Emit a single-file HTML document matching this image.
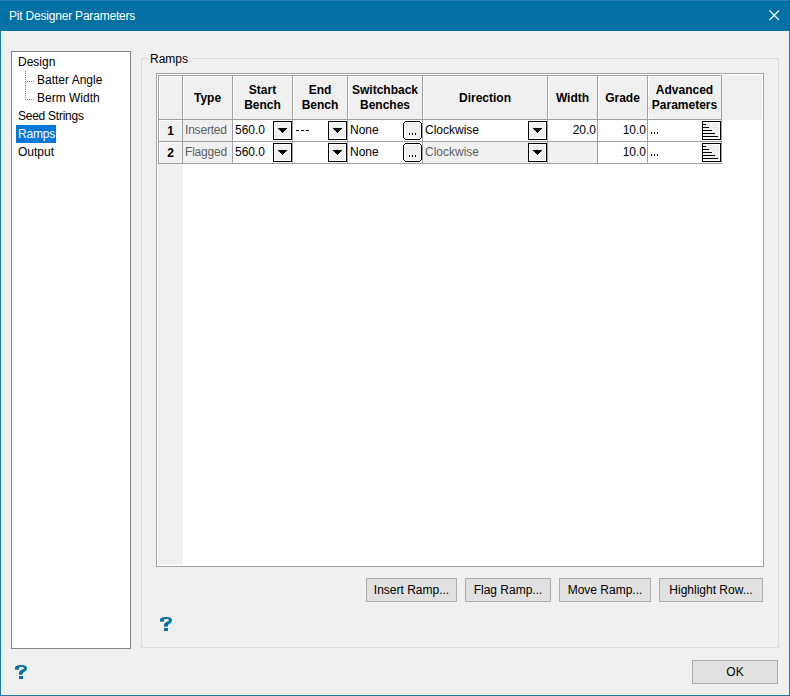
<!DOCTYPE html>
<html><head><meta charset="utf-8">
<style>
*{box-sizing:border-box;margin:0;padding:0}
html,body{width:790px;height:696px;overflow:hidden;background:#f0f0f0}
body{position:relative;font-family:"Liberation Sans",sans-serif;font-size:12px;color:#000}
.a{position:absolute}
.t{position:absolute;white-space:pre;line-height:12px;font-size:12px;letter-spacing:0px}
.b{font-weight:bold}
.btn{position:absolute;background:#e1e1e1;border:1px solid #adadad;height:24px}
.btn span{position:absolute;left:0;right:0;top:5px;text-align:center;line-height:12px;white-space:pre;font-size:12px;letter-spacing:0px}
.dd{position:absolute;width:19px;height:19px;border:1px solid #000;background:#f0f0f0;border-radius:1px}
.dd:after{content:"";position:absolute;left:4px;top:6px;border-left:5px solid transparent;border-right:5px solid transparent;border-top:5px solid #000}
.el{position:absolute;width:19px;height:19px;border:1px solid #000;background:#f0f0f0;border-radius:3px}
.gray{color:#5f5f5f}

</style></head><body>
<div class="a" style="left:0px;top:0px;width:790px;height:696px;background:#f0f0f0;border:1px solid #2279b0;border-top:0"></div>
<div class="a" style="left:0px;top:0px;width:790px;height:31px;background:#0371a6;border-top:1px solid #2a7db0"></div>
<div class="t " style="left:9px;top:10px;color:#fff;letter-spacing:-0.2px">Pit Designer Parameters</div>
<svg class="a" style="left:768px;top:9px" width="13" height="13" viewBox="0 0 13 13"><path d="M1.5 1.5L11 11M11 1.5L1.5 11" stroke="#fff" stroke-width="1.1"/></svg>
<div class="a" style="left:11px;top:51px;width:120px;height:598px;background:#fff;border:1px solid #828790"></div>
<div class="t " style="left:18px;top:56px;">Design</div>
<div class="t " style="left:37px;top:74px;">Batter Angle</div>
<div class="t " style="left:37px;top:92px;">Berm Width</div>
<div class="t " style="left:18px;top:110px;letter-spacing:-0.25px">Seed Strings</div>
<div class="a" style="left:16px;top:125px;width:40px;height:18px;background:#0078d7;"></div>
<div class="t " style="left:18px;top:128px;color:#fff;letter-spacing:-0.2px">Ramps</div>
<div class="t " style="left:18px;top:146px;">Output</div>
<div class="a" style="left:25px;top:71px;width:1px;height:1px;background:#808080;"></div>
<div class="a" style="left:25px;top:73px;width:1px;height:1px;background:#808080;"></div>
<div class="a" style="left:25px;top:75px;width:1px;height:1px;background:#808080;"></div>
<div class="a" style="left:25px;top:77px;width:1px;height:1px;background:#808080;"></div>
<div class="a" style="left:25px;top:79px;width:1px;height:1px;background:#808080;"></div>
<div class="a" style="left:25px;top:81px;width:1px;height:1px;background:#808080;"></div>
<div class="a" style="left:25px;top:83px;width:1px;height:1px;background:#808080;"></div>
<div class="a" style="left:25px;top:85px;width:1px;height:1px;background:#808080;"></div>
<div class="a" style="left:25px;top:87px;width:1px;height:1px;background:#808080;"></div>
<div class="a" style="left:25px;top:89px;width:1px;height:1px;background:#808080;"></div>
<div class="a" style="left:25px;top:91px;width:1px;height:1px;background:#808080;"></div>
<div class="a" style="left:25px;top:93px;width:1px;height:1px;background:#808080;"></div>
<div class="a" style="left:25px;top:95px;width:1px;height:1px;background:#808080;"></div>
<div class="a" style="left:25px;top:97px;width:1px;height:1px;background:#808080;"></div>
<div class="a" style="left:25px;top:99px;width:1px;height:1px;background:#808080;"></div>
<div class="a" style="left:27px;top:81px;width:1px;height:1px;background:#808080;"></div>
<div class="a" style="left:27px;top:99px;width:1px;height:1px;background:#808080;"></div>
<div class="a" style="left:29px;top:81px;width:1px;height:1px;background:#808080;"></div>
<div class="a" style="left:29px;top:99px;width:1px;height:1px;background:#808080;"></div>
<div class="a" style="left:31px;top:81px;width:1px;height:1px;background:#808080;"></div>
<div class="a" style="left:31px;top:99px;width:1px;height:1px;background:#808080;"></div>
<div class="a" style="left:33px;top:81px;width:1px;height:1px;background:#808080;"></div>
<div class="a" style="left:33px;top:99px;width:1px;height:1px;background:#808080;"></div>
<div class="a" style="left:141px;top:58px;width:638px;height:590px;background:transparent;border:1px solid #dcdcdc"></div>
<div class="a" style="left:148px;top:52px;width:40px;height:12px;background:#f0f0f0;"></div>
<div class="t " style="left:150px;top:53px;">Ramps</div>
<div class="a" style="left:156px;top:73px;width:608px;height:494px;background:#fff;border:1px solid #a2a4ab"></div>
<div class="a" style="left:158px;top:75px;width:604px;height:45px;background:#f0f0f0;"></div>
<div class="a" style="left:158px;top:75px;width:25px;height:490px;background:#f0f0f0;"></div>
<div class="a" style="left:183px;top:120px;width:49px;height:21px;background:#f0f0f0;"></div>
<div class="a" style="left:183px;top:142px;width:49px;height:21px;background:#f0f0f0;"></div>
<div class="a" style="left:423px;top:142px;width:124px;height:21px;background:#f0f0f0;"></div>
<div class="a" style="left:548px;top:142px;width:49px;height:21px;background:#f0f0f0;"></div>
<div class="a" style="left:159px;top:76px;width:23px;height:1px;background:#fff;"></div>
<div class="a" style="left:159px;top:76px;width:1px;height:43px;background:#fff;"></div>
<div class="a" style="left:183px;top:76px;width:49px;height:1px;background:#fff;"></div>
<div class="a" style="left:183px;top:76px;width:1px;height:43px;background:#fff;"></div>
<div class="a" style="left:233px;top:76px;width:59px;height:1px;background:#fff;"></div>
<div class="a" style="left:233px;top:76px;width:1px;height:43px;background:#fff;"></div>
<div class="a" style="left:293px;top:76px;width:54px;height:1px;background:#fff;"></div>
<div class="a" style="left:293px;top:76px;width:1px;height:43px;background:#fff;"></div>
<div class="a" style="left:348px;top:76px;width:74px;height:1px;background:#fff;"></div>
<div class="a" style="left:348px;top:76px;width:1px;height:43px;background:#fff;"></div>
<div class="a" style="left:423px;top:76px;width:124px;height:1px;background:#fff;"></div>
<div class="a" style="left:423px;top:76px;width:1px;height:43px;background:#fff;"></div>
<div class="a" style="left:548px;top:76px;width:49px;height:1px;background:#fff;"></div>
<div class="a" style="left:548px;top:76px;width:1px;height:43px;background:#fff;"></div>
<div class="a" style="left:598px;top:76px;width:49px;height:1px;background:#fff;"></div>
<div class="a" style="left:598px;top:76px;width:1px;height:43px;background:#fff;"></div>
<div class="a" style="left:648px;top:76px;width:73px;height:1px;background:#fff;"></div>
<div class="a" style="left:648px;top:76px;width:1px;height:43px;background:#fff;"></div>
<div class="a" style="left:159px;top:120px;width:23px;height:1px;background:#fff;"></div>
<div class="a" style="left:159px;top:120px;width:1px;height:21px;background:#fff;"></div>
<div class="a" style="left:159px;top:142px;width:23px;height:1px;background:#fff;"></div>
<div class="a" style="left:159px;top:142px;width:1px;height:21px;background:#fff;"></div>
<div class="a" style="left:158px;top:75px;width:564px;height:1px;background:#a0a0a0;"></div>
<div class="a" style="left:158px;top:119px;width:564px;height:1px;background:#a0a0a0;"></div>
<div class="a" style="left:158px;top:141px;width:564px;height:1px;background:#a0a0a0;"></div>
<div class="a" style="left:158px;top:163px;width:564px;height:1px;background:#a0a0a0;"></div>
<div class="a" style="left:158px;top:75px;width:1px;height:89px;background:#a0a0a0;"></div>
<div class="a" style="left:182px;top:75px;width:1px;height:89px;background:#a0a0a0;"></div>
<div class="a" style="left:232px;top:75px;width:1px;height:89px;background:#a0a0a0;"></div>
<div class="a" style="left:292px;top:75px;width:1px;height:89px;background:#a0a0a0;"></div>
<div class="a" style="left:347px;top:75px;width:1px;height:89px;background:#a0a0a0;"></div>
<div class="a" style="left:422px;top:75px;width:1px;height:89px;background:#a0a0a0;"></div>
<div class="a" style="left:547px;top:75px;width:1px;height:89px;background:#a0a0a0;"></div>
<div class="a" style="left:597px;top:75px;width:1px;height:89px;background:#a0a0a0;"></div>
<div class="a" style="left:647px;top:75px;width:1px;height:89px;background:#a0a0a0;"></div>
<div class="a" style="left:721px;top:75px;width:1px;height:89px;background:#a0a0a0;"></div>
<div class="t b" style="left:107.5px;width:200px;text-align:center;top:92px;">Type</div>
<div class="t b" style="left:162.5px;width:200px;text-align:center;top:84px;">Start</div>
<div class="t b" style="left:162.5px;width:200px;text-align:center;top:99px;">Bench</div>
<div class="t b" style="left:220.0px;width:200px;text-align:center;top:84px;">End</div>
<div class="t b" style="left:220.0px;width:200px;text-align:center;top:99px;">Bench</div>
<div class="t b" style="left:285.0px;width:200px;text-align:center;top:84px;">Switchback</div>
<div class="t b" style="left:285.0px;width:200px;text-align:center;top:99px;">Benches</div>
<div class="t b" style="left:385.0px;width:200px;text-align:center;top:92px;">Direction</div>
<div class="t b" style="left:472.5px;width:200px;text-align:center;top:92px;">Width</div>
<div class="t b" style="left:522.5px;width:200px;text-align:center;top:92px;">Grade</div>
<div class="t b" style="left:584.5px;width:200px;text-align:center;top:84px;">Advanced</div>
<div class="t b" style="left:584.5px;width:200px;text-align:center;top:99px;">Parameters</div>
<div class="t b" style="left:70.5px;width:200px;text-align:center;top:125px;">1</div>
<div class="t gray" style="left:185px;top:124px;letter-spacing:-0.2px">Inserted</div>
<div class="t " style="left:235px;top:124px;">560.0</div>
<svg class="a" style="left:273px;top:121px" width="19" height="19" shape-rendering="crispEdges"><rect x="0" y="0" width="19" height="19" fill="#000"/><rect x="1" y="1" width="17" height="17" fill="#fff"/><rect x="2" y="2" width="15" height="15" fill="#f0f0f0"/><path d="M5 7h9v1h-9zM6 8h7v1h-7zM7 9h5v1h-5zM8 10h3v1h-3zM9 11h1v1h-1z" fill="#000"/></svg>
<div class="a" style="left:296px;top:130px;width:3px;height:1px;background:#000;"></div>
<div class="a" style="left:301px;top:130px;width:3px;height:1px;background:#000;"></div>
<div class="a" style="left:306px;top:130px;width:3px;height:1px;background:#000;"></div>
<svg class="a" style="left:328px;top:121px" width="19" height="19" shape-rendering="crispEdges"><rect x="0" y="0" width="19" height="19" fill="#000"/><rect x="1" y="1" width="17" height="17" fill="#fff"/><rect x="2" y="2" width="15" height="15" fill="#f0f0f0"/><path d="M5 7h9v1h-9zM6 8h7v1h-7zM7 9h5v1h-5zM8 10h3v1h-3zM9 11h1v1h-1z" fill="#000"/></svg>
<div class="t " style="left:350px;top:124px;">None</div>
<svg class="a" style="left:403px;top:121px" width="19" height="19" shape-rendering="crispEdges"><rect x="1" y="1" width="17" height="17" fill="#fff"/><rect x="2" y="2" width="15" height="15" fill="#f0f0f0"/><path d="M2 0h15v1h-15zM2 18h15v1h-15zM0 2h1v15h-1zM18 2h1v15h-1zM1 1h1v1h-1zM17 1h1v1h-1zM1 17h1v1h-1zM17 17h1v1h-1zM6 12h1v2h-1zM9 12h1v2h-1zM12 12h1v2h-1z" fill="#000"/></svg>
<div class="t " style="left:425px;top:124px;">Clockwise</div>
<svg class="a" style="left:528px;top:121px" width="19" height="19" shape-rendering="crispEdges"><rect x="0" y="0" width="19" height="19" fill="#000"/><rect x="1" y="1" width="17" height="17" fill="#fff"/><rect x="2" y="2" width="15" height="15" fill="#f0f0f0"/><path d="M5 7h9v1h-9zM6 8h7v1h-7zM7 9h5v1h-5zM8 10h3v1h-3zM9 11h1v1h-1z" fill="#000"/></svg>
<div class="t " style="left:496px;width:100px;text-align:right;top:124px;">20.0</div>
<div class="t " style="left:546px;width:100px;text-align:right;top:124px;">10.0</div>
<div class="a" style="left:651px;top:132px;width:1px;height:2px;background:#000;"></div>
<div class="a" style="left:654px;top:132px;width:1px;height:2px;background:#000;"></div>
<div class="a" style="left:657px;top:132px;width:1px;height:2px;background:#000;"></div>
<div class="a" style="left:702px;top:121px;width:19px;height:19px;border:1px solid #000;background:#f0f0f0;box-shadow:inset 1px 1px 0 #fff,inset -1px -1px 0 #fff"></div>
<div class="a" style="left:703px;top:124px;width:3px;height:1px;background:#000;"></div>
<div class="a" style="left:703px;top:127px;width:6px;height:1px;background:#000;"></div>
<div class="a" style="left:703px;top:130px;width:9px;height:1px;background:#000;"></div>
<div class="a" style="left:703px;top:133px;width:12px;height:1px;background:#000;"></div>
<div class="a" style="left:703px;top:136px;width:15px;height:1px;background:#000;"></div>
<div class="t b" style="left:70.5px;width:200px;text-align:center;top:147px;">2</div>
<div class="t gray" style="left:185px;top:146px;letter-spacing:-0.2px">Flagged</div>
<div class="t " style="left:235px;top:146px;">560.0</div>
<svg class="a" style="left:273px;top:143px" width="19" height="19" shape-rendering="crispEdges"><rect x="0" y="0" width="19" height="19" fill="#000"/><rect x="1" y="1" width="17" height="17" fill="#fff"/><rect x="2" y="2" width="15" height="15" fill="#f0f0f0"/><path d="M5 7h9v1h-9zM6 8h7v1h-7zM7 9h5v1h-5zM8 10h3v1h-3zM9 11h1v1h-1z" fill="#000"/></svg>
<svg class="a" style="left:328px;top:143px" width="19" height="19" shape-rendering="crispEdges"><rect x="0" y="0" width="19" height="19" fill="#000"/><rect x="1" y="1" width="17" height="17" fill="#fff"/><rect x="2" y="2" width="15" height="15" fill="#f0f0f0"/><path d="M5 7h9v1h-9zM6 8h7v1h-7zM7 9h5v1h-5zM8 10h3v1h-3zM9 11h1v1h-1z" fill="#000"/></svg>
<div class="t " style="left:350px;top:146px;">None</div>
<svg class="a" style="left:403px;top:143px" width="19" height="19" shape-rendering="crispEdges"><rect x="1" y="1" width="17" height="17" fill="#fff"/><rect x="2" y="2" width="15" height="15" fill="#f0f0f0"/><path d="M2 0h15v1h-15zM2 18h15v1h-15zM0 2h1v15h-1zM18 2h1v15h-1zM1 1h1v1h-1zM17 1h1v1h-1zM1 17h1v1h-1zM17 17h1v1h-1zM6 12h1v2h-1zM9 12h1v2h-1zM12 12h1v2h-1z" fill="#000"/></svg>
<div class="t gray" style="left:425px;top:146px;">Clockwise</div>
<svg class="a" style="left:528px;top:143px" width="19" height="19" shape-rendering="crispEdges"><rect x="0" y="0" width="19" height="19" fill="#000"/><rect x="1" y="1" width="17" height="17" fill="#fff"/><rect x="2" y="2" width="15" height="15" fill="#f0f0f0"/><path d="M5 7h9v1h-9zM6 8h7v1h-7zM7 9h5v1h-5zM8 10h3v1h-3zM9 11h1v1h-1z" fill="#000"/></svg>
<div class="t " style="left:546px;width:100px;text-align:right;top:146px;">10.0</div>
<div class="a" style="left:651px;top:154px;width:1px;height:2px;background:#000;"></div>
<div class="a" style="left:654px;top:154px;width:1px;height:2px;background:#000;"></div>
<div class="a" style="left:657px;top:154px;width:1px;height:2px;background:#000;"></div>
<div class="a" style="left:702px;top:143px;width:19px;height:19px;border:1px solid #000;background:#f0f0f0;box-shadow:inset 1px 1px 0 #fff,inset -1px -1px 0 #fff"></div>
<div class="a" style="left:703px;top:146px;width:3px;height:1px;background:#000;"></div>
<div class="a" style="left:703px;top:149px;width:6px;height:1px;background:#000;"></div>
<div class="a" style="left:703px;top:152px;width:9px;height:1px;background:#000;"></div>
<div class="a" style="left:703px;top:155px;width:12px;height:1px;background:#000;"></div>
<div class="a" style="left:703px;top:158px;width:15px;height:1px;background:#000;"></div>
<div class="btn" style="left:366px;top:578px;width:91px"><span>Insert Ramp...</span></div>
<div class="btn" style="left:465px;top:578px;width:86px"><span>Flag Ramp...</span></div>
<div class="btn" style="left:559px;top:578px;width:92px"><span>Move Ramp...</span></div>
<div class="btn" style="left:659px;top:578px;width:104px"><span>Highlight Row...</span></div>
<div class="btn" style="left:692px;top:660px;width:86px"><span>OK</span></div>
<svg class="a" style="left:160px;top:617px" width="13" height="14"><path d="M0 4.8V3C0 0.8 3 0 6.2 0C9.6 0 12 1 12 3.4C12 5.6 9.6 6.4 8.6 7.2C8.1 7.7 7.8 8.6 7.6 9.8H4V8C4 6 5.8 5.2 7.6 4.4C8.6 3.9 9 3.5 9 3C9 2.3 7.8 2 6.4 2C4.8 2 4 2.4 4 3.2V4.8Z" fill="#0371a6"/><rect x="4" y="11" width="4" height="3" fill="#0371a6"/></svg>
<svg class="a" style="left:15px;top:665px" width="13" height="14"><path d="M0 4.8V3C0 0.8 3 0 6.2 0C9.6 0 12 1 12 3.4C12 5.6 9.6 6.4 8.6 7.2C8.1 7.7 7.8 8.6 7.6 9.8H4V8C4 6 5.8 5.2 7.6 4.4C8.6 3.9 9 3.5 9 3C9 2.3 7.8 2 6.4 2C4.8 2 4 2.4 4 3.2V4.8Z" fill="#0371a6"/><rect x="4" y="11" width="4" height="3" fill="#0371a6"/></svg>
</body></html>
